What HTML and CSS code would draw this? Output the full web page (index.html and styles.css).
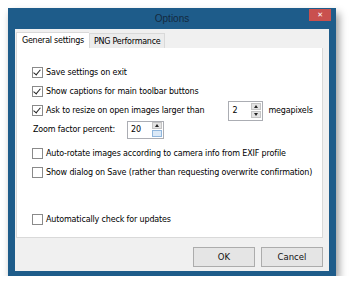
FILE: index.html
```html
<!DOCTYPE html>
<html lang="en">
<head>
    <meta charset="UTF-8">
    <title>Options</title>
    <link rel="stylesheet" href="styles.css">
</head>
<body>
    <div class="window">
        <div class="titlebar">
            <span></span>
            <span class="title">Options</span>
            <span class="close">&#x2715;</span>
        </div>
        <div class="client">
            <div class="tabs">
                <div class="tab active">General settings</div>
                <div class="tab">PNG Performance</div>
            </div>
            <div class="panel">
                <label class="row"><span class="check on"></span>Save settings on exit</label>
                <label class="row"><span class="check on"></span>Show captions for main toolbar buttons</label>
                <div class="row">
                    <span class="check on"></span>Ask to resize on open images larger than
                    <span class="spin mp">
                        <span class="spin-val">2</span>
                        <span class="spin-btns"><span class="up"></span><span class="down"></span></span>
                    </span>
                    <span class="unit">megapixels</span>
                </div>
                <div class="row zoom">
                    Zoom factor percent:
                    <span class="spin zf">
                        <span class="spin-val">20</span>
                        <span class="spin-btns"><span class="up"></span><span class="down blue"></span></span>
                    </span>
                </div>
                <label class="row gap"><span class="check"></span>Auto-rotate images according to camera info from EXIF profile</label>
                <label class="row"><span class="check"></span>Show dialog on Save (rather than requesting overwrite confirmation)</label>
                <label class="row last"><span class="check"></span>Automatically check for updates</label>
            </div>
            <div class="buttons">
                <button class="btn">OK</button>
                <button class="btn">Cancel</button>
            </div>
        </div>
    </div>
</body>
</html>
```

FILE: styles.css
```css
body {
    margin: 0;
    background: #ffffff;
    font-family: "DejaVu Sans", sans-serif;
    font-size: 8px;
    letter-spacing: -0.15px;
    color: #000;
}
.window {
    margin: 8px 0 0 8px;
    width: 328px;
    height: 268px;
    background: #1e5c8a;
    box-shadow: 3px 5px 8px rgba(0,0,0,0.4);
    display: flex;
    flex-direction: column;
}
.titlebar {
    height: 21px;
    display: grid;
    grid-template-columns: 1fr auto 1fr;
    align-items: start;
}
.title {
    margin-top: 5px;
    font-family: "Liberation Sans", sans-serif;
    letter-spacing: 0;
    font-size: 10px;
    color: #142a40;
}
.close {
    justify-self: end;
    margin: 1px 5px 0 0;
    width: 22px;
    height: 12px;
    background: #c9504e;
    color: #ffffff;
    font-size: 7px;
    font-weight: bold;
    text-align: center;
    line-height: 12px;
}
.client {
    flex: 1;
    margin: 0 7px 5px 7px;
    background: #f0f0f0;
    padding: 3px 6px 0 1px;
    display: flex;
    flex-direction: column;
}
.tabs {
    display: flex;
    align-items: flex-end;
    height: 16px;
}
.tab {
    height: 15px;
    padding: 0 4px;
    line-height: 15px;
    border: 1px solid #d9d9d9;
    border-bottom: none;
    background: #ececec;
    color: #000;
    font-size: 8px;
    letter-spacing: -0.25px;
    box-sizing: border-box;
}
.tab.active {
    height: 16px;
    line-height: 16px;
    padding: 0 5px;
    background: #ffffff;
    border-right: none;
}
.panel {
    height: 190px;
    box-sizing: border-box;
    background: #ffffff;
    border: 1px solid #d9d9d9;
    border-top: none;
    padding: 15px 0 0 15px;
    display: flex;
    flex-direction: column;
}
.row {
    height: 19px;
    display: flex;
    align-items: center;
    white-space: nowrap;
}
.row.gap {
    margin-top: 5px;
}
.row.last {
    margin-top: 28px;
}
.check {
    width: 9px;
    height: 9px;
    border: 1px solid #8a8a8a;
    background: #ffffff;
    margin-right: 3px;
    position: relative;
    flex: none;
}
.check.on::after {
    content: "";
    position: absolute;
    left: 2px;
    top: 0px;
    width: 3px;
    height: 6px;
    border: solid #222;
    border-width: 0 1.5px 1.5px 0;
    transform: rotate(40deg);
}
.spin {
    flex: none;
    display: flex;
    align-items: center;
    justify-content: space-between;
    border: 1px solid #abadb3;
    background: #ffffff;
    padding: 0 1px 0 3px;
    box-sizing: border-box;
}
.spin.mp {
    margin-left: 24px;
    width: 35px;
    height: 20px;
}
.spin.zf {
    margin-left: 12px;
    width: 37px;
    height: 18px;
}
.spin-btns {
    display: flex;
    flex-direction: column;
    gap: 1px;
}
.up, .down {
    width: 10px;
    height: 7px;
    background: #e3e3e3;
    border: 1px solid #c4c4c4;
    box-sizing: border-box;
    position: relative;
}
.up::after, .down::after {
    content: "";
    position: absolute;
    left: 2px;
    border-left: 2px solid transparent;
    border-right: 2px solid transparent;
}
.up::after {
    top: 1px;
    border-bottom: 3px solid #222;
}
.down::after {
    top: 1px;
    border-top: 3px solid #222;
}
.down.blue {
    background: #dbe9f7;
    border-color: #90b6dc;
}
.down.blue::after {
    display: none;
}
.unit {
    margin-left: 5px;
}
.zoom {
    padding-left: 1px;
}
.buttons {
    display: flex;
    justify-content: flex-end;
    gap: 6px;
    margin-top: 9px;
}
.btn {
    width: 62px;
    height: 20px;
    background: #e5e5e5;
    border: 1px solid #acacac;
    font-family: inherit;
    font-size: 8.5px;
    letter-spacing: 0;
    color: #111;
    padding: 0;
}
```
